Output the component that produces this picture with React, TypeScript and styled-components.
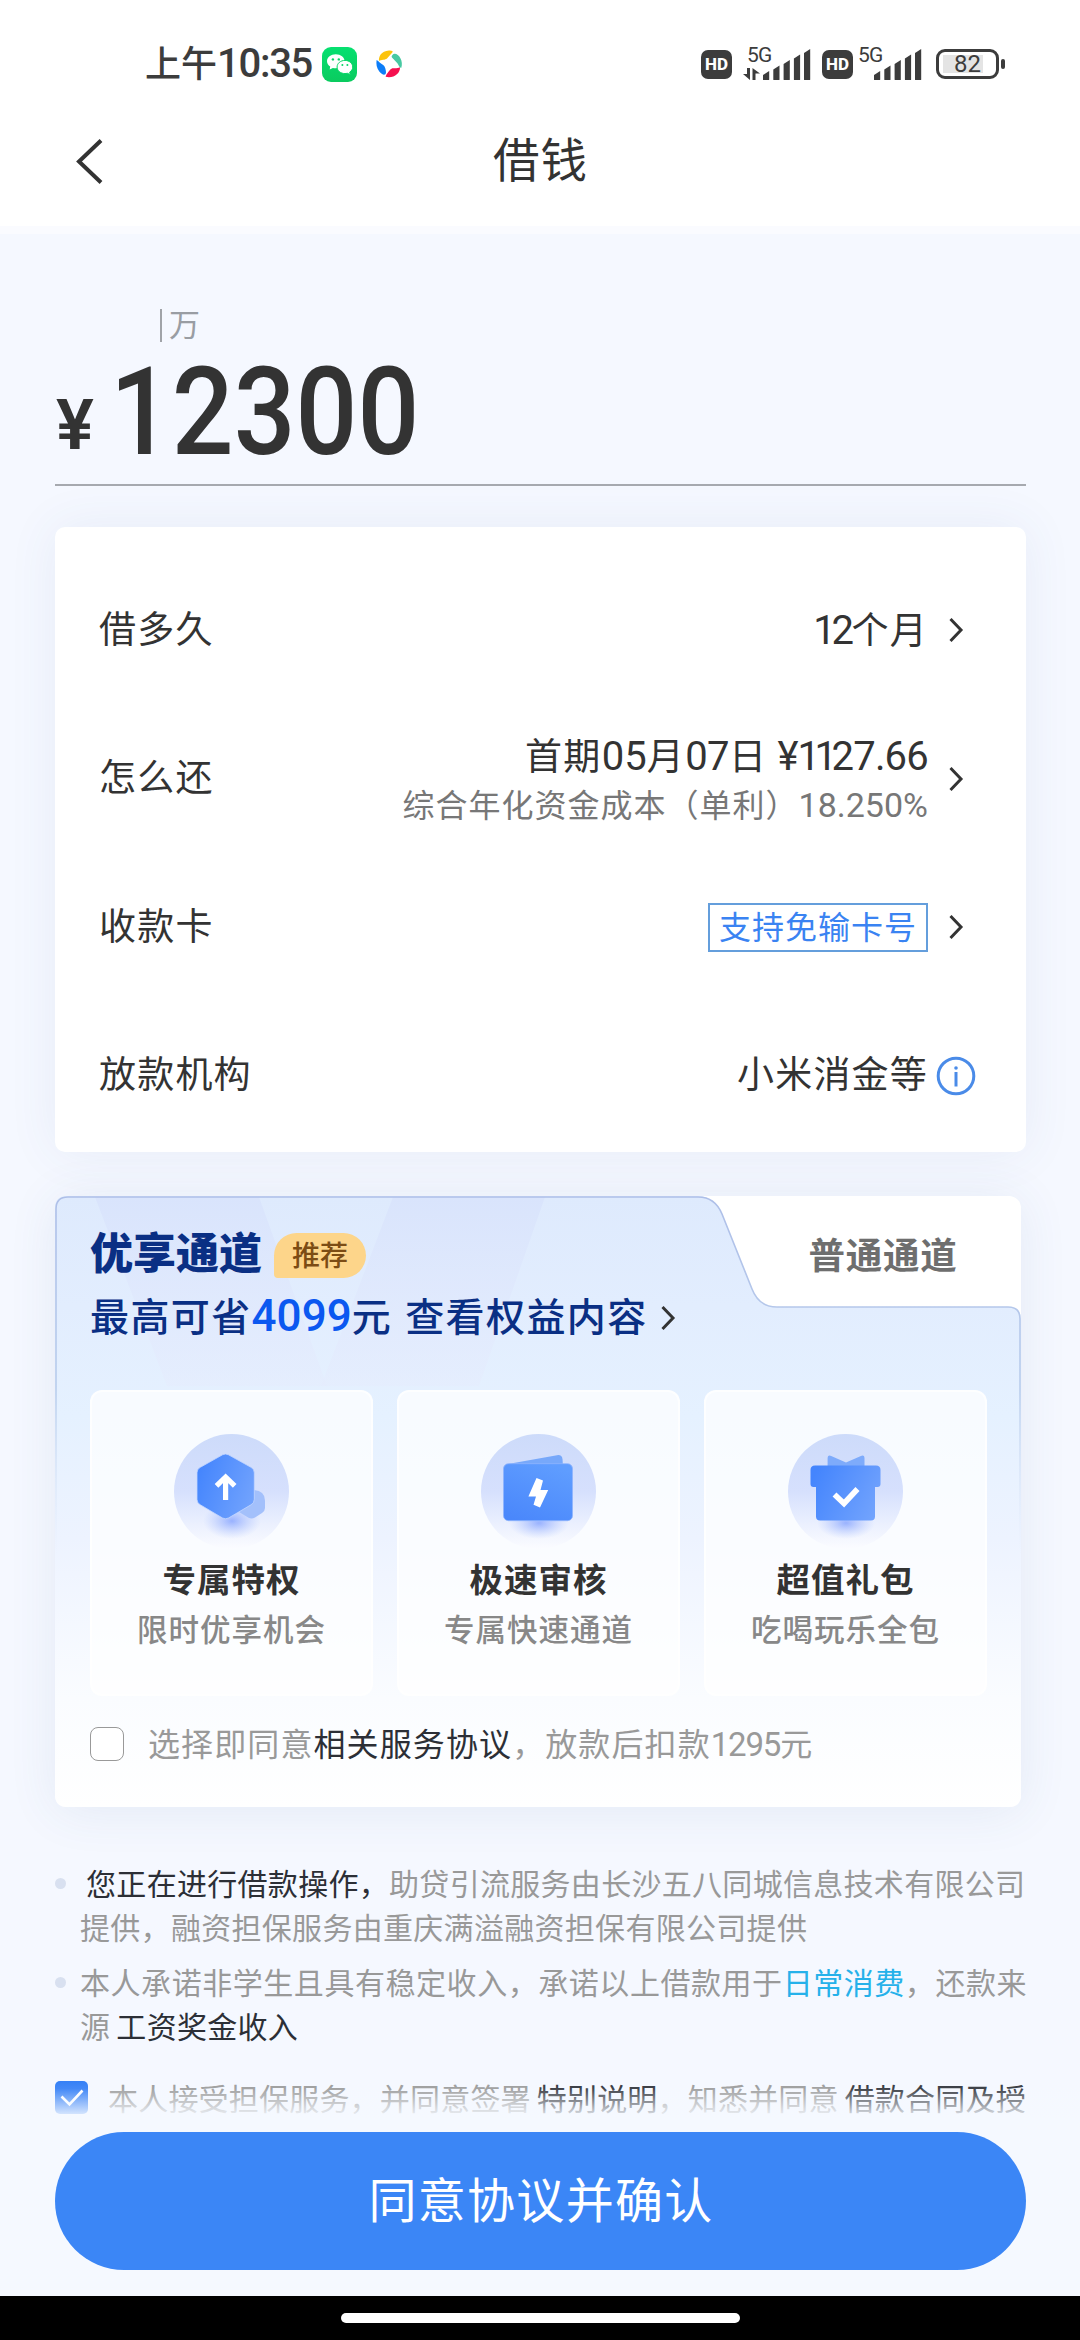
import React from "react";
import styled, { createGlobalStyle } from "styled-components";

const CJK = `"Noto Sans CJK SC", "Noto Sans", sans-serif`;
const LATIN = `Roboto, "Noto Sans CJK SC", sans-serif`;

const GlobalStyle = createGlobalStyle`
  * { box-sizing: border-box; }
  html, body { margin: 0; padding: 0; background: #f5f8ff; }
  body { font-family: ${CJK}; color: #333; }
  svg { display: block; flex: none; }
`;

const Screen = styled.div`
  position: relative;
  display: flex;
  flex-direction: column;
  width: 1080px;
  height: 2340px;
  overflow: hidden;
  background: #f5f8ff;
`;

/* One run of text. `pitch` is the distance between neighbouring characters,
   `lift` is room kept below the line so that a centred run sits higher. */
const Text = styled.span<{
  $size: number;
  $pitch?: number;
  $color?: string;
  $weight?: number;
  $lift?: number;
}>`
  font-size: ${(p) => p.$size}px;
  letter-spacing: ${(p) => (p.$pitch ? p.$pitch - p.$size : 0)}px;
  color: ${(p) => p.$color ?? "#333"};
  font-weight: ${(p) => p.$weight ?? 400};
  padding-bottom: ${(p) => p.$lift ?? 0}px;
  line-height: 1;
  white-space: pre;
`;

const Num = styled.span<{ $size: number; $ls?: number; $color?: string; $weight?: number }>`
  font-family: ${LATIN};
  font-size: ${(p) => p.$size}px;
  letter-spacing: ${(p) => p.$ls ?? 0}px;
  line-height: 1;
  ${(p) => (p.$color ? `color: ${p.$color};` : "")}
  ${(p) => (p.$weight ? `font-weight: ${p.$weight};` : "")}
`;

/* ---------- status bar ---------- */

const StatusBar = styled.div`
  display: flex;
  align-items: center;
  justify-content: space-between;
  height: 128px;
  padding: 0 75px 0 145px;
  background: #fff;
`;

const StatusLeft = styled.div`
  display: flex;
  align-items: center;
`;

const StatusRight = styled.div`
  display: flex;
  align-items: center;
`;

const AppGap = styled.span`
  width: 19px;
`;

const Clock = styled.div`
  display: flex;
  align-items: baseline;
  width: 177px;
  height: 38px;
  line-height: 38px;
  margin-top: -5px;
`;

const HdBadge = styled.div<{ $right: number }>`
  display: flex;
  align-items: center;
  justify-content: center;
  width: 31px;
  height: 29px;
  margin-right: ${(p) => p.$right}px;
  border-radius: 7px;
  background: #3c3c3c;
  color: #fff;
  font: 800 17px/1 ${LATIN};
`;

const Signal = styled.div<{ $right: number }>`
  display: grid;
  grid-template-columns: 28px 39px;
  width: 67px;
  height: 36px;
  margin-right: ${(p) => p.$right}px;
`;

const SignalLabel = styled.div`
  display: flex;
  flex-direction: column;
  justify-content: space-between;
  padding: 1px 0 2px;
  font: 400 21px/17px ${LATIN};
  letter-spacing: -0.8px;
  color: #3c3c3c;
  white-space: nowrap;
`;

const LabelInset = styled.span`
  padding-left: 4px;
`;

const BarsSlot = styled.div`
  padding-top: 2px;
  margin-left: -8px;
`;

const Battery = styled.div`
  display: flex;
  align-items: center;
`;

const BatteryShell = styled.div`
  display: flex;
  align-items: center;
  justify-content: center;
  width: 63px;
  height: 30px;
  border: 3px solid #3c3c3c;
  border-radius: 9px;
  background: linear-gradient(#e4e4e4, #e4e4e4) 4px 3px / 40px 18px no-repeat #fff;
  font: 400 24px/1 ${LATIN};
  color: #3c3c3c;
`;

const BatteryTip = styled.div`
  width: 4px;
  height: 10px;
  margin-left: 2px;
  border-radius: 2px;
  background: #3c3c3c;
`;

/* ---------- title bar ---------- */

const TitleBar = styled.div`
  display: grid;
  grid-template-columns: 120px 1fr 120px;
  align-items: center;
  height: 98px;
  background: #fff;
`;

const BackButton = styled.div`
  display: flex;
  padding-left: 77px;
  margin-top: -31px;
`;

const TitleText = styled.div`
  display: flex;
  justify-content: center;
  padding-left: 1px;
  margin-top: -40px;
`;

const HeaderEdge = styled.div`
  height: 8px;
  background: #fafbff;
`;

/* ---------- amount ---------- */

const Amount = styled.section`
  display: flex;
  flex-direction: column;
  height: 252px;
  margin: 0 54px 0 55px;
  padding-top: 75px;
  border-bottom: 2px solid #a6a9af;
`;

const UnitMark = styled.div`
  display: flex;
  align-items: center;
  height: 33px;
  margin-left: 105px;
  padding-left: 7px;
  border-left: 2px solid #a0a3a8;
`;

const AmountValue = styled.div`
  display: flex;
  align-items: baseline;
  height: 120px;
  margin-top: 11px;
  padding-left: 1px;
  font-family: ${LATIN};
  color: #333;
`;

const Currency = styled.span`
  display: block;
  width: 54px;
  font-size: 71px;
  font-weight: 600;
  line-height: 120px;
  transform: translateY(-5px);
`;

const Digits = styled.span`
  font-size: 122px;
  font-weight: 500;
  line-height: 120px;
  transform: scaleX(0.892);
  transform-origin: 0 50%;
`;

/* ---------- loan details ---------- */

const DetailCard = styled.section`
  height: 625px;
  margin: 41px 54px 0 55px;
  padding: 29px 40px 0 44px;
  border-radius: 10px;
  background: #fff;
  box-shadow: 0 0 50px rgba(60, 90, 150, 0.08);
`;

const DetailRow = styled.div`
  display: flex;
  align-items: center;
  justify-content: space-between;
  height: 148.5px;
`;

const DetailRight = styled.div`
  display: flex;
  align-items: center;
`;

const Stack = styled.div`
  display: flex;
  flex-direction: column;
  align-items: flex-end;
  gap: 10px;
`;

const Tag = styled.div`
  display: flex;
  align-items: center;
  justify-content: center;
  width: 220px;
  height: 49px;
  border: 2px solid #649edc;
`;

const ArrowSlot = styled.div`
  display: flex;
  width: 58px;
  padding-left: 21px;
`;

const InfoSlot = styled.div`
  display: flex;
  width: 58px;
  padding-left: 8px;
`;

/* ---------- channel card ---------- */

const ChannelCard = styled.section`
  position: relative;
  display: flex;
  flex-direction: column;
  width: 966px;
  height: 611px;
  margin: 44px 0 0 55px;
  border-radius: 12px;
  background: #fff;
  box-shadow: 0 4px 50px rgba(60, 85, 140, 0.09);
`;

const TabArt = styled.svg`
  position: absolute;
  inset: 0;
`;

const ChannelHead = styled.div`
  position: relative;
  display: grid;
  grid-template-columns: 1fr 266px;
  height: 194px;
`;

const Premium = styled.div`
  display: flex;
  flex-direction: column;
  padding: 35px 0 0 35px;
`;

const PremiumTitle = styled.div`
  display: flex;
  align-items: center;
  height: 46px;
`;

const Badge = styled.div`
  display: flex;
  align-items: center;
  justify-content: center;
  width: 92px;
  height: 45px;
  margin: 3px 0 0 12px;
  border-radius: 23px 23px 23px 4px;
  background: #fdd58a;
`;

const PremiumSub = styled.div`
  display: flex;
  align-items: baseline;
  height: 44px;
  line-height: 44px;
  margin-top: 17px;
  word-spacing: 3px;
`;

const SubArrow = styled.span`
  align-self: center;
  margin: 4px 0 0 13px;
`;

const OrdinaryTab = styled.div`
  display: flex;
  justify-content: center;
  padding: 40px 10px 0 0;
`;

const Perks = styled.div`
  position: relative;
  display: grid;
  grid-template-columns: repeat(3, 283px);
  gap: 24px;
  padding-left: 35px;
`;

const Perk = styled.div`
  display: flex;
  flex-direction: column;
  align-items: center;
  height: 306px;
  padding-top: 42px;
  border: 2px solid rgba(255, 255, 255, 0.75);
  border-radius: 12px;
  background: rgba(255, 255, 255, 0.72);
`;

const PerkTitle = styled.div`
  display: flex;
  margin-top: 12px;
`;

const PerkNote = styled.div`
  display: flex;
  margin-top: 18px;
`;

const Agreement = styled.div`
  position: relative;
  display: flex;
  align-items: center;
  height: 34px;
  margin: 31px 0 0 35px;
`;

const EmptyBox = styled.div`
  width: 34px;
  height: 34px;
  margin-right: 24px;
  border: 1.5px solid #999;
  border-radius: 8px;
  background: #fff;
`;

/* ---------- notes ---------- */

const Notes = styled.section`
  display: flex;
  flex-direction: column;
  gap: 11px;
  margin: 53px 0 0 55px;
`;

const Note = styled.div`
  display: grid;
  grid-template-columns: 25px 1fr;
`;

const Dot = styled.i`
  width: 11px;
  height: 11px;
  margin-top: 18px;
  border-radius: 50%;
  background: #d8e0f0;
`;

const NoteText = styled.div<{ $ls?: number }>`
  font-size: 30px;
  line-height: 44px;
  letter-spacing: ${(p) => p.$ls ?? 0.3}px;
  word-spacing: -1px;
  color: #999;
  white-space: pre;
`;

const Strong = styled.span`
  color: #2c2f36;
`;

const Cyan = styled.span`
  color: #26b1ea;
`;

const Consent = styled.div`
  display: flex;
  align-items: center;
  height: 44px;
  margin: 28px 0 0 55px;
`;

const CheckedBox = styled.div`
  display: flex;
  align-items: center;
  justify-content: center;
  width: 33px;
  height: 33px;
  margin: 1px 20px 0 0;
  border-radius: 5px;
  background: #2f7cf6;
`;

const Fade = styled.div`
  position: absolute;
  left: 0;
  right: 0;
  top: 2078px;
  height: 42px;
  background: linear-gradient(rgba(245, 249, 255, 0), rgba(245, 249, 255, 0.1) 25%, #f5f9ff);
`;

/* ---------- footer ---------- */

const Footer = styled.footer`
  position: absolute;
  left: 0;
  right: 0;
  bottom: 0;
  display: flex;
  flex-direction: column;
  align-items: center;
  height: 220px;
  padding-top: 12px;
  background: #f5f9ff;
`;

const Confirm = styled.button`
  display: flex;
  align-items: center;
  justify-content: center;
  width: 971px;
  height: 138px;
  margin: 0 0 26px 1px;
  padding: 0 0 8px 1px;
  border: 0;
  border-radius: 69px;
  background: #3b86f6;
  font-family: ${CJK};
`;

const NavBar = styled.div`
  display: flex;
  justify-content: center;
  width: 100%;
  height: 44px;
  padding-top: 17px;
  background: #000;
`;

const NavPill = styled.div`
  width: 399px;
  height: 10px;
  border-radius: 5px;
  background: #fff;
`;

/* ---------- icons ---------- */

const WeChatIcon = () => (
  <svg width="35" height="35" viewBox="0 0 35 35">
    <defs>
      <linearGradient id="wx" x1="0" y1="0" x2="0" y2="1">
        <stop offset="0" stopColor="#06e070" />
        <stop offset="1" stopColor="#0acb5f" />
      </linearGradient>
    </defs>
    <rect width="35" height="35" rx="9" fill="url(#wx)" />
    <path d="M13.8 7.2c-4.9 0-8.8 3.1-8.8 7 0 2.2 1.3 4.1 3.2 5.4l-.5 3 3.2-1.7c1 .2 1.9.3 2.9.3 4.9 0 8.8-3.1 8.8-7s-3.9-7-8.8-7z" fill="#fff" />
    <path d="M23 13.4c-4.4 0-7.9 2.9-7.9 6.6s3.5 6.6 7.9 6.6c.9 0 1.7-.1 2.5-.3l2.7 1.4-.5-2.6c1.9-1.2 3-3 3-5 0-3.8-3.4-6.7-7.7-6.7z" fill="#fff" stroke="#08d566" strokeWidth="1" />
    <circle cx="10.9" cy="12.4" r="1.2" fill="#08d566" />
    <circle cx="16.8" cy="12.4" r="1.2" fill="#08d566" />
    <circle cx="20.4" cy="18" r="1" fill="#08d566" />
    <circle cx="25.4" cy="18" r="1" fill="#08d566" />
  </svg>
);

const PinwheelIcon = () => (
  <svg width="27" height="28" viewBox="0 0 27 28">
    <path d="M3 11C2.5 7 5 1 13 .6c3-.1 4.5.6 3.3 2L11 8.4C9.500 10 5 9.500 3 11z" fill="#fcc30c" />
    <path d="M16.400 5c2-2.600 6-.6 8 3.200 1.600 3 2 6.500.8 9.800-2-.5-2.400-3-3.800-4.800L16.200 7.700c-1-.9-.4-1.900.2-2.700z" fill="#47c9a2" />
    <path d="M24 17.200c.4 6-6 11.500-14.400 9.600.6-2.800 3-5.200 5-7.600 2-2 6.500-.2 9.400-2z" fill="#f5104f" />
    <path d="M.6 10c2 1.200 4 3.500 6.600 5 1.800 1.200 2.800 5 2.800 7.500C9.700 26 6 25 3.300 21.500.6 18 0 14 .6 10z" fill="#0c7df8" />
  </svg>
);

const bars = [
  [0, 22],
  [10.3, 16.5],
  [20.6, 11],
  [30.9, 5.5],
  [41, 0],
];

const SignalBars = () => (
  <svg width="48" height="34" viewBox="0 0 48 34" overflow="visible">
    {bars.map(([x, y]) => (
      <path key={x} d={`M${x} 31.5V${y + 5}L${x + 6.2} ${y + 1}V31.5q0 .5-.5.5H${x + 0.5}q-.5 0-.5-.5z`} fill="#3c3c3c" />
    ))}
  </svg>
);

const DataArrows = () => (
  <svg width="17" height="12" viewBox="0 0 17 12">
    <path d="M4 0h3v12L0 6h4zM9.5 12h3V5.5H17L9.5 0z" fill="#3c3c3c" />
  </svg>
);

const Chevron = ({ w = 14, h = 24, stroke = 3, left = false }: { w?: number; h?: number; stroke?: number; left?: boolean }) => (
  <svg width={w} height={h} viewBox={`0 0 ${w} ${h}`} overflow="visible">
    <path
      d={left ? `M${w - 2} 1.5L2 ${h / 2}L${w - 2} ${h - 1.5}` : `M1.5 1L${w - 2} ${h / 2}L1.5 ${h - 1}`}
      fill="none"
      stroke="#333"
      strokeWidth={stroke}
    />
  </svg>
);

const InfoIcon = () => (
  <svg width="40" height="40" viewBox="0 0 40 40">
    <circle cx="20" cy="20" r="17.8" fill="none" stroke="#4a8be8" strokeWidth="3" />
    <circle cx="20" cy="12" r="1.8" fill="#4a8be8" />
    <path d="M20 16v14.5" stroke="#4a8be8" strokeWidth="3" />
  </svg>
);

const PerkDefs = () => (
  <defs>
    <linearGradient id="disc" x1="0" y1="0" x2="0" y2="1">
      <stop offset="0" stopColor="#cddbfa" />
      <stop offset="0.5" stopColor="#d6e0fd" />
      <stop offset="1" stopColor="#fbfcff" />
    </linearGradient>
    <linearGradient id="front" x1="0" y1="0.3" x2="1" y2="0.7">
      <stop offset="0" stopColor="#4485fd" />
      <stop offset="1" stopColor="#72a3fd" />
    </linearGradient>
    <linearGradient id="wallet" x1="0.2" y1="1" x2="0.7" y2="0">
      <stop offset="0" stopColor="#4a87fb" />
      <stop offset="1" stopColor="#5f9dff" />
    </linearGradient>
    <radialGradient id="glow">
      <stop offset="0" stopColor="#7d9dff" stopOpacity="0.75" />
      <stop offset="1" stopColor="#a9bfff" stopOpacity="0" />
    </radialGradient>
  </defs>
);

const PrivilegeIcon = () => (
  <svg width="115" height="115" viewBox="0 0 115 115">
    <PerkDefs />
    <circle cx="57.5" cy="57.5" r="57.5" fill="url(#disc)" />
    <ellipse cx="58" cy="87" rx="29" ry="18" fill="url(#glow)" />
    <path d="M80 56q11 1 11 10.500v7.500q0 3-3 5l-7 4.500q-3 1.500-6 .5L65 78z" fill="#a3c0fb" />
    <path d="M48.5 20.800q3-1.600 6 0L77 33.300q3.300 1.800 3.300 5.500v26.500q0 3.700-3.300 5.500L54.500 84q-3 1.600-6 0L26.300 70.800Q23 69 23 65.300V38.800q0-3.700 3.300-5.500z" fill="url(#front)" stroke="#c4d7ff" strokeWidth="0.8" />
    <path d="M51.6 66V43M42.5 51.800l9.100-8.800 9.100 8.800" fill="none" stroke="#fff" strokeWidth="5.2" />
  </svg>
);

const ReviewIcon = () => (
  <svg width="115" height="115" viewBox="0 0 115 115">
    <circle cx="57.5" cy="57.5" r="57.5" fill="url(#disc)" />
    <ellipse cx="58" cy="89" rx="30" ry="16" fill="url(#glow)" />
    <path d="M27 30L76 21.200q5-.7 5.500 4L82 32H27z" fill="#77a8fa" />
    <rect x="22.5" y="29.7" width="69" height="57" rx="5" fill="url(#wallet)" stroke="#8fb4fc" strokeWidth="0.8" />
    <path d="M55.5 44l6.500 2.500L59.500 56h7.700L59 73.500l-6.500-2.800L55 62.500h-7.600z" fill="#fff" />
  </svg>
);

const GiftIcon = () => (
  <svg width="115" height="115" viewBox="0 0 115 115">
    <circle cx="57.5" cy="57.5" r="57.5" fill="url(#disc)" />
    <ellipse cx="58" cy="89" rx="29" ry="16" fill="url(#glow)" />
    <path d="M39.6 33V24.500q0-4 3.600-2.500L58 28.500 72.900 22q3.600-1.500 3.600 2.500V33z" fill="#7eabfb" />
    <path d="M27 31.5h61q4.500 0 4.500 4.500v14q0 3-3 3H87v29.500q0 4-4 4H32q-4 0-4-4V53h-2.500q-3 0-3-3V36q0-4.500 4.500-4.500z" fill="url(#front)" />
    <path d="M46.5 60.500l9.500 9L69.500 55" fill="none" stroke="#fff" strokeWidth="5.6" />
  </svg>
);

const ChannelArt = () => (
  <TabArt width="966" height="611" viewBox="0 0 966 611">
    <defs>
      <linearGradient id="sky" x1="0" y1="0" x2="0" y2="1">
        <stop offset="0" stopColor="#deeafd" />
        <stop offset="0.18" stopColor="#e2edfe" />
        <stop offset="0.36" stopColor="#e5f1ff" />
        <stop offset="0.56" stopColor="#edf3ff" />
        <stop offset="0.82" stopColor="#fafcff" />
        <stop offset="1" stopColor="#ffffff" />
      </linearGradient>
      <linearGradient id="ray" x1="0" y1="0" x2="0" y2="1">
        <stop offset="0" stopColor="#d9e4fc" />
        <stop offset="1" stopColor="#e5ecfd" stopOpacity="0.6" />
      </linearGradient>
      <linearGradient id="edge" x1="0" y1="0" x2="0" y2="1">
        <stop offset="0" stopColor="#aebfe8" />
        <stop offset="0.4" stopColor="#b9cdec" />
        <stop offset="0.75" stopColor="#dfe8f8" stopOpacity="0" />
      </linearGradient>
    </defs>
    <path d="M0 12Q0 0 12 0H643Q660 0 667 18L697 93Q704 111 722 111H954Q966 111 966 123V599Q966 611 954 611H12Q0 611 0 599z" fill="url(#sky)" />
    <path d="M40 1H204L272 190H112z" fill="url(#ray)" />
    <path d="M338 1H490L424 190H266z" fill="url(#ray)" />
    <path d="M1 480V13Q1 1 13 1H643Q660 1 667 18L697 93Q704 111 722 111H953Q965 111 965 123V480" fill="none" stroke="url(#edge)" strokeWidth="1.6" />
  </TabArt>
);

const perks = [
  { title: "专属特权", note: "限时优享机会", icon: <PrivilegeIcon /> },
  { title: "极速审核", note: "专属快速通道", icon: <ReviewIcon /> },
  { title: "超值礼包", note: "吃喝玩乐全包", icon: <GiftIcon /> },
];

const Arrow = () => (
  <ArrowSlot>
    <Chevron />
  </ArrowSlot>
);

const Label = ({ children }: { children: React.ReactNode }) => (
  <Text $size={37} $pitch={38.2} $lift={6}>{children}</Text>
);

export default function App() {
  return (
    <>
      <GlobalStyle />
      <Screen>
        <StatusBar>
          <StatusLeft>
            <Clock>
              <Text $size={36} $weight={500} $color="#3c3c3c">上午</Text>
              <Num $size={40} $weight={500} $color="#3c3c3c" $ls={-1.3}>10:35</Num>
            </Clock>
            <WeChatIcon />
            <AppGap />
            <PinwheelIcon />
          </StatusLeft>
          <StatusRight>
            <HdBadge $right={11}>HD</HdBadge>
            <Signal $right={12}>
              <SignalLabel>
                <LabelInset>5G</LabelInset>
                <DataArrows />
              </SignalLabel>
              <BarsSlot><SignalBars /></BarsSlot>
            </Signal>
            <HdBadge $right={1}>HD</HdBadge>
            <Signal $right={15}>
              <SignalLabel>
                <LabelInset>5G</LabelInset>
              </SignalLabel>
              <BarsSlot><SignalBars /></BarsSlot>
            </Signal>
            <Battery>
              <BatteryShell>82</BatteryShell>
              <BatteryTip />
            </Battery>
          </StatusRight>
        </StatusBar>
        <TitleBar>
          <BackButton><Chevron w={26} h={45} stroke={4} left /></BackButton>
          <TitleText><Text $size={46.5} $pitch={47.5}>借钱</Text></TitleText>
        </TitleBar>
        <HeaderEdge />

        <Amount>
          <UnitMark><Text $size={31} $color="#999da3" $lift={6}>万</Text></UnitMark>
          <AmountValue>
            <Currency>¥</Currency>
            <Digits>12300</Digits>
          </AmountValue>
        </Amount>

        <DetailCard>
          <DetailRow>
            <Label>借多久</Label>
            <DetailRight>
              <Text $size={37} $pitch={38.2}><Num $size={40} $ls={-4}>1</Num><Num $size={40} $ls={-2.5}>2</Num>个月</Text>
              <Arrow />
            </DetailRight>
          </DetailRow>
          <DetailRow>
            <Label>怎么还</Label>
            <DetailRight>
              <Stack>
                <Text $size={37} $pitch={38.4}>
                  首期<Num $size={40}>05</Num>月<Num $size={40} $ls={-0.5}>07</Num>日<Num $size={40}> </Num><Num $size={40} $ls={-0.9}>¥</Num><Num $size={40} $ls={-5.5}>11</Num><Num $size={40} $ls={-0.8}>27.66</Num>
                </Text>
                <Text $size={32} $pitch={33} $color="#777">
                  综合年化资金成本（单利）<Num $size={34}>18.250%</Num>
                </Text>
              </Stack>
              <Arrow />
            </DetailRight>
          </DetailRow>
          <DetailRow>
            <Label>收款卡</Label>
            <DetailRight>
              <Tag><Text $size={32} $pitch={33} $color="#3a83f2" $lift={4}>支持免输卡号</Text></Tag>
              <Arrow />
            </DetailRight>
          </DetailRow>
          <DetailRow>
            <Label>放款机构</Label>
            <DetailRight>
              <Label>小米消金等</Label>
              <InfoSlot><InfoIcon /></InfoSlot>
            </DetailRight>
          </DetailRow>
        </DetailCard>

        <ChannelCard>
          <ChannelArt />
          <ChannelHead>
            <Premium>
              <PremiumTitle>
                <Text $size={43} $weight={900} $color="#0a2f84" $lift={8}>优享通道</Text>
                <Badge><Text $size={28} $weight={500} $color="#7c4c14" $lift={3}>推荐</Text></Badge>
              </PremiumTitle>
              <PremiumSub>
                <Text $size={39} $pitch={40.4} $weight={500} $color="#0a2f84">最高可省</Text>
                <Num $size={44} $weight={500} $color="#0b58f0">4099</Num>
                <Text $size={39} $pitch={40.4} $weight={500} $color="#0a2f84">元 查看权益内容</Text>
                <SubArrow><Chevron w={14} h={24} /></SubArrow>
              </PremiumSub>
            </Premium>
            <OrdinaryTab><Text $size={36.5} $pitch={37.3} $weight={700} $color="#6e6e6e">普通通道</Text></OrdinaryTab>
          </ChannelHead>
          <Perks>
            {perks.map((p) => (
              <Perk key={p.title}>
                {p.icon}
                <PerkTitle><Text $size={33.5} $pitch={34.5} $weight={700}>{p.title}</Text></PerkTitle>
                <PerkNote><Text $size={30.5} $pitch={31.5} $weight={500} $color="#888">{p.note}</Text></PerkNote>
              </Perk>
            ))}
          </Perks>
          <Agreement>
            <EmptyBox />
            <Text $size={32} $pitch={33.1} $color="#999" $lift={1}>
              选择即同意<Strong>相关服务协议</Strong>，放款后扣款<Num $size={33} $ls={-1.2}>1295</Num>元
            </Text>
          </Agreement>
        </ChannelCard>

        <Notes>
          <Note>
            <Dot />
            <NoteText>
              <Strong>{" "}您正在进行借款操作，</Strong>助贷引流服务由长沙五八同城信息技术有限公司{"\n"}提供，融资担保服务由重庆满溢融资担保有限公司提供
            </NoteText>
          </Note>
          <Note>
            <Dot />
            <div>
              <NoteText $ls={0.55}>
                本人承诺非学生且具有稳定收入，承诺以上借款用于<Cyan>日常消费</Cyan>，还款来
              </NoteText>
              <NoteText>
                源 <Strong>工资奖金收入</Strong>
              </NoteText>
            </div>
          </Note>
        </Notes>
        <Consent>
          <CheckedBox>
            <svg width="24" height="18" viewBox="0 0 24 18">
              <path d="M1.5 7.500l8 8L22.500 1.500" fill="none" stroke="#fff" strokeWidth="2.6" />
            </svg>
          </CheckedBox>
          <NoteText $ls={0.2}>
            本人接受担保服务，并同意签署 <Strong>特别说明</Strong>，知悉并同意 <Strong>借款合同及授</Strong>
          </NoteText>
        </Consent>

        <Fade />
        <Footer>
          <Confirm><Text $size={48} $pitch={49.3} $color="#fff">同意协议并确认</Text></Confirm>
          <NavBar><NavPill /></NavBar>
        </Footer>
      </Screen>
    </>
  );
}
